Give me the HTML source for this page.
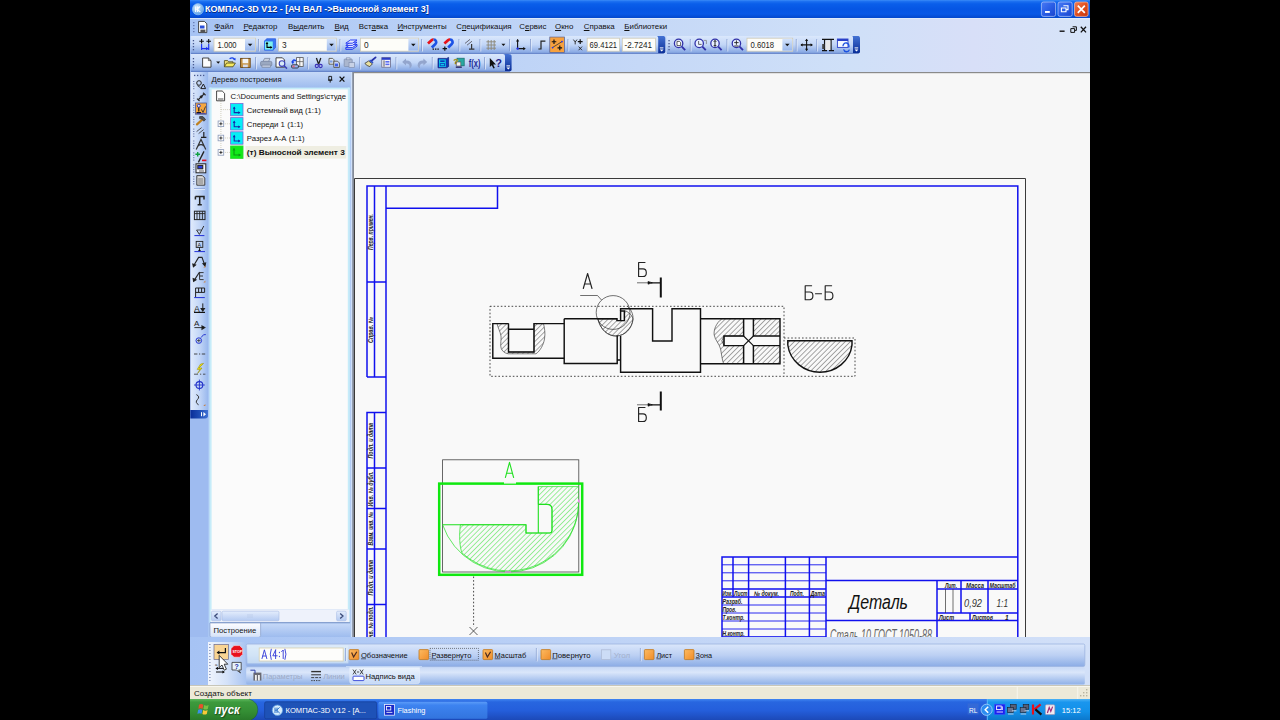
<!DOCTYPE html>
<html><head><meta charset="utf-8">
<style>
*{box-sizing:border-box;margin:0;padding:0}
html,body{width:1280px;height:720px;overflow:hidden;background:#000}
body{font-family:"Liberation Sans",sans-serif;font-size:8px;color:#000;position:relative}
.a{position:absolute}
#app{position:absolute;left:190px;top:0;width:900px;height:720px;background:#9ebbf0;overflow:hidden}
#title{left:0;top:0;width:900px;height:18px;background:linear-gradient(#3a8bf8 0,#1a6ef0 9%,#0a5eea 22%,#0656e4 50%,#0858e6 78%,#0448cc 100%)}
#title .t{left:15px;top:3.5px;font-weight:bold;font-size:9px;color:#fff;white-space:nowrap;text-shadow:0.5px 0.5px 0 #0a2a80}
#menu{left:0;top:18px;width:900px;height:18px;background:linear-gradient(90deg,#a6c3f4 0,#b9d0f6 25%,#c5d8f7 50%,#cfe0f8 73%,#d8dff8 87%,#d6e4f8 100%)}
#menu:before{content:"";position:absolute;left:0;top:0;width:900px;height:1.4px;background:#e4edfb;opacity:.8}
#menu span{position:absolute;top:4px;font-size:7.9px;white-space:nowrap;color:#111}
#tb1{left:0;top:36px;width:900px;height:18px;background:linear-gradient(90deg,#a9c5f4 0,#bdd2f5 40%,#c7d6f3 100%)}
#tb2{left:0;top:54px;width:900px;height:18px;background:linear-gradient(90deg,#a9c5f4 0,#bdd2f5 40%,#c7d6f3 100%)}
.bar{position:absolute;height:17px;border-radius:2px;background:linear-gradient(#dbe8fc 0,#c3d7f7 45%,#8fb0e8 100%)}
.inp{position:absolute;background:#fcfcf8;height:13px;font-size:7.9px;line-height:13px;padding-left:3px;border:1px solid #c8d4e8}

#tree{left:18px;top:72px;width:146px;height:565px;background:#aac6f3}
#treehead{left:0;top:0;width:142px;height:15px;background:linear-gradient(#cfe0fb,#9dbcef);font-size:7.9px;line-height:15px;padding-left:4px}
#treebody{left:2px;top:16px;width:137px;height:520px;background:#fbfbfb}
#treebody span{position:absolute;font-size:7.6px;white-space:nowrap}
#canvas{left:164px;top:72px;width:736px;height:565px;background:#f7f7f7;overflow:hidden}



</style></head><body>
<div id="app">
<div id="title" class="a"><div class="t a">КОМПАС-3D V12 - [АЧ ВАЛ -&gt;Выносной элемент 3]</div>
<svg class="a" style="left:0;top:0" width="900" height="18" viewBox="190 0 900 18">
<defs>
<linearGradient id="wb" x1="0" y1="0" x2="1" y2="1"><stop offset="0" stop-color="#4a7af4"/><stop offset="0.5" stop-color="#2a5ee6"/><stop offset="1" stop-color="#1a44cc"/></linearGradient>
<linearGradient id="wc" x1="0" y1="0" x2="1" y2="1"><stop offset="0" stop-color="#f08058"/><stop offset="0.5" stop-color="#e2501e"/><stop offset="1" stop-color="#c2340e"/></linearGradient>
<radialGradient id="ki" cx="0.4" cy="0.35" r="0.7"><stop offset="0" stop-color="#dff0ff"/><stop offset="1" stop-color="#4d9ae8"/></radialGradient>
</defs>
<circle cx="198" cy="9.2" r="5.6" fill="url(#ki)" stroke="#9cc8f5" stroke-width="0.6"/>
<path d="M195.6 6.5V12M195.6 9.2H197.2L200.2 6.4M197.2 9.2L200.4 12.2M197.6 6.5V12" stroke="#f8fcff" stroke-width="1.1" fill="none"/>
<rect x="1041.4" y="2" width="14.2" height="14.4" rx="2" fill="url(#wb)" stroke="#b8ccfa" stroke-width="0.7"/>
<rect x="1058" y="2" width="14.2" height="14.4" rx="2" fill="url(#wb)" stroke="#b8ccfa" stroke-width="0.7"/>
<rect x="1074.5" y="2" width="13.6" height="14.4" rx="2" fill="url(#wc)" stroke="#f0c0b0" stroke-width="0.7"/>
<rect x="1045" y="11" width="4.8" height="1.9" fill="#fff"/>
<path d="M1063.4 5.8H1068V9.6H1066.6M1061.4 8H1066V11.8H1061.4Z" fill="none" stroke="#fff" stroke-width="1.1"/>
<path d="M1077.8 5.6L1084.8 12.8M1084.8 5.6L1077.8 12.8" stroke="#fff" stroke-width="1.7"/>
</svg>
</div>
<div id="menu" class="a">
<svg class="a" style="left:0;top:0" width="900" height="18" viewBox="190 18 900 18">
<g fill="#5b6ea8"><rect x="193.2" y="22" width="1.2" height="1.2"/><rect x="193.2" y="25" width="1.2" height="1.2"/><rect x="193.2" y="28" width="1.2" height="1.2"/><rect x="193.2" y="31" width="1.2" height="1.2"/></g>
<path d="M198.6 21.4H204.4L206.8 23.8V32.6H198.6Z" fill="#fff" stroke="#333" stroke-width="0.9"/>
<path d="M200 25.5H204.5V28.5H200Z" fill="#2a4fd8"/><rect x="200.4" y="29.6" width="5" height="2.4" fill="#555"/>
<path d="M1059.6 31.2H1064.6" stroke="#111" stroke-width="1.4"/>
<path d="M1072.6 26.8H1076.4V30.4H1075M1070.8 28.6H1074.6V32.4H1070.8Z" fill="none" stroke="#111" stroke-width="1"/>
<path d="M1080.8 26.8L1086 32.4M1086 26.8L1080.8 32.4" stroke="#111" stroke-width="1.3"/>
</svg>
<span style="left:24.3px"><u>Ф</u>айл</span><span style="left:53.4px"><u>Р</u>едактор</span><span style="left:98px">В<u>ы</u>делить</span><span style="left:144.4px"><u>В</u>ид</span><span style="left:168.8px">Вст<u>а</u>вка</span><span style="left:207.4px"><u>И</u>нструменты</span><span style="left:266.2px">С<u>п</u>ецификация</span><span style="left:329.3px">С<u>е</u>рвис</span><span style="left:365px"><u>О</u>кно</span><span style="left:393.8px"><u>С</u>правка</span><span style="left:434.3px"><u>Б</u>иблиотеки</span>
</div>
<svg id="tbs" class="a" style="left:0;top:36px" width="900" height="36" viewBox="190 36 900 36">
<defs>
<linearGradient id="bg" x1="0" y1="0" x2="0" y2="1"><stop offset="0" stop-color="#dbe8fc"/><stop offset="0.5" stop-color="#c2d6f7"/><stop offset="0.92" stop-color="#8aaae4"/><stop offset="1" stop-color="#6f8fd0"/></linearGradient>
<linearGradient id="cap" x1="0" y1="0" x2="0" y2="1"><stop offset="0" stop-color="#4573d4"/><stop offset="1" stop-color="#082c96"/></linearGradient>
<linearGradient id="tbg" x1="0" y1="0" x2="1" y2="0"><stop offset="0" stop-color="#a6c3f4"/><stop offset="0.25" stop-color="#b9d0f6"/><stop offset="0.5" stop-color="#c5d8f7"/><stop offset="0.73" stop-color="#cfe0f8"/><stop offset="0.87" stop-color="#d8dff8"/><stop offset="1" stop-color="#d6e4f8"/></linearGradient>
<linearGradient id="dd" x1="0" y1="0" x2="0" y2="1"><stop offset="0" stop-color="#d4e3fb"/><stop offset="1" stop-color="#9ab8ec"/></linearGradient>
<g id="grip" fill="#48598f"><rect x="0" y="0" width="1.3" height="1.3"/><rect x="0" y="3" width="1.3" height="1.3"/><rect x="0" y="6" width="1.3" height="1.3"/><rect x="0" y="9" width="1.3" height="1.3"/></g>
<g id="capi"><rect x="0" y="11.2" width="3.6" height="1" fill="#fff"/><path d="M0 13.4H3.8L1.9 15.4Z" fill="#fff"/></g>
</defs>
<rect x="190" y="36" width="900" height="36" fill="url(#tbg)"/>
<!-- bars -->
<path d="M191 35.8H662Q665.3 35.8 665.3 38V51.5Q665.3 53.6 662 53.6H191Z" fill="url(#cap)"/>
<rect x="190.6" y="35.8" width="667.6" height="17.8" fill="url(#bg)" transform="scale(1)" style="display:none"/>
<path d="M190.6 35.8H656Q658 35.8 658.2 38V53.6H190.6Z" fill="url(#bg)"/>
<path d="M667 35.8H857Q860 35.8 860 38V51.5Q860 53.6 857 53.6H667Z" fill="url(#cap)"/>
<path d="M667.6 35.8H851.5Q853 35.8 853 38V53.6H667.6Q666.6 53.6 666.6 52V37.5Q666.6 35.8 667.6 35.8Z" fill="url(#bg)"/>
<path d="M191 53.9H508Q511.6 53.9 511.6 56V69.4Q511.6 71.4 508 71.4H191Z" fill="url(#cap)"/>
<path d="M190.6 53.9H503Q505 53.9 505 56V71.4H190.6Z" fill="url(#bg)"/>
<use href="#capi" x="659.8" y="36.2"/><use href="#capi" x="854.6" y="36.2"/><use href="#capi" x="506.4" y="54.2"/>
<use href="#grip" x="192.8" y="40"/><use href="#grip" x="192.8" y="58"/><use href="#grip" x="668.4" y="40"/>
<!-- separators -->
<g stroke="#7f97cc" stroke-width="0.9"><path d="M258.5 39V51M340 39V51M421.7 39V51M459 39V51M480 39V51M509.7 39V51M530.5 39V51M568 39V51M690.3 39V51M727 39V51M796.3 39V51M816.8 39V51"/>
<path d="M255.7 57V69M307.8 57V69M359.8 57V69M396 57V69M432.3 57V69M484.7 57V69"/></g>
<g stroke="#eef4fe" stroke-width="0.7"><path d="M259.3 39.5V51.5M340.8 39.5V51.5M422.5 39.5V51.5M459.8 39.5V51.5M480.8 39.5V51.5M510.5 39.5V51.5M531.3 39.5V51.5M568.8 39.5V51.5M691.1 39.5V51.5M727.8 39.5V51.5M797.1 39.5V51.5M817.6 39.5V51.5"/>
<path d="M256.5 57.5V69.5M308.6 57.5V69.5M360.6 57.5V69.5M396.8 57.5V69.5M433.1 57.5V69.5M485.5 57.5V69.5"/></g>
<!-- inputs -->
<g fill="#fdfdf9" stroke="#cfcab6" stroke-width="0.8">
<rect x="214" y="38.2" width="41.5" height="13"/><rect x="278.6" y="38.2" width="57.7" height="13"/><rect x="360.4" y="38.2" width="58.1" height="13"/>
<rect x="587.2" y="38.2" width="32.3" height="13"/><rect x="622.3" y="38.2" width="33.2" height="13"/><rect x="747" y="38.2" width="45.7" height="13"/>
</g>
<g fill="url(#dd)"><rect x="245" y="38.7" width="10" height="12"/><rect x="326.8" y="38.7" width="9" height="12"/><rect x="408.4" y="38.7" width="9.6" height="12"/><rect x="782.4" y="38.7" width="9.8" height="12"/></g>
<g fill="#111"><path d="M247.8 43.8H252.4L250.1 46.3Z"/><path d="M329.2 43.8H333.8L331.5 46.3Z"/><path d="M411 43.8H415.6L413.3 46.3Z"/><path d="M785 43.8H789.6L787.3 46.3Z"/><path d="M501.4 43.8H505.4L503.4 46Z"/><path d="M216.2 61.6H220.2L218.2 63.8Z"/></g>
<g font-family="Liberation Sans, sans-serif" font-size="8.3" fill="#222">
<text x="217.6" y="47.8" textLength="19" lengthAdjust="spacingAndGlyphs">1.000</text><text x="282" y="47.8">3</text><text x="364" y="47.8">0</text><text x="589.6" y="47.8" textLength="27.5" lengthAdjust="spacingAndGlyphs">69.4121</text><text x="624.6" y="47.8" textLength="27.5" lengthAdjust="spacingAndGlyphs">-2.7241</text><text x="750.6" y="47.8" textLength="23.5" lengthAdjust="spacingAndGlyphs">0.6018</text>
</g>
<!--ICONS-->
<!-- row1 icons -->
<g fill="none">
<!-- scale icon -->
<path d="M201.6 39V43.6M199.3 41.3H203.9M208.7 39V43.6M206.4 41.3H211" stroke="#111" stroke-width="1.1"/>
<path d="M201.6 44V50M208.7 44V50M201.6 48.6H208.7" stroke="#1a2ef0" stroke-width="1.1"/>
<path d="M206 47L208.6 48.6L206 50.2Z" fill="#1a2ef0"/>
<!-- layer state -->
<path d="M266.6 38.8H275.6V47.4L273.2 50H264.6V41.2Z" fill="#3d78f0" stroke="#2a5ae0" stroke-width="0.8"/>
<rect x="264.6" y="41" width="8.6" height="9" fill="#7cf0ee" stroke="#2a6af0" stroke-width="0.8"/>
<path d="M267 42.4V47.4H271.6" stroke="#000" stroke-width="1.1"/>
<path d="M265.6 44L267 42L268.4 44ZM270.4 46L272.4 47.4L270.4 48.8Z" fill="#000"/>
<!-- layers -->
<g stroke="#1a2ef0" stroke-width="0.9" fill="#e8ecff">
<path d="M345.8 47.6L350.4 44.4H357L352.4 47.6Z"/><path d="M345.8 45.4L350.4 42.2H357L352.4 45.4Z"/><path d="M345.8 43.2L350.4 40H357L352.4 43.2Z"/></g>
<path d="M345.8 47.6V49.4H352.4L357 46.2V44.4" stroke="#1a2ef0" stroke-width="0.9"/>
<!-- magnets -->
<g stroke-width="2.7" stroke-linecap="butt">
<g id="mag"><path d="M428 43.6L431.6 40.2A2.6 2.6 0 0 1 433.6 39.5" stroke="#e6121a"/><path d="M433.6 39.5A2.6 2.6 0 0 1 435.4 44L431.8 47.4" stroke="#1c52e6"/></g>
<use href="#mag" x="16.4"/>
</g>
<path d="M432.6 49.2H434M435 49.2H436.4M437.4 49.2H438.8" stroke="#111" stroke-width="1.2"/>
<path d="M442.6 48.6H447M444.8 46.6V50.8" stroke="#111" stroke-width="1.2"/>
<!-- ortho-ish -->
<path d="M465 43.4L470 39.4M467 45.2L472 41.2" stroke="#5a5a66" stroke-width="0.9"/>
<path d="M471.6 44V48.8M469 49.2H474.4" stroke="#333" stroke-width="1.2"/>
<!-- grid -->
<g stroke="#8c8878" stroke-width="0.9"><path d="M488.2 40V50M491.2 40V50M494.2 40V50M486.4 41.8H496M486.4 45H496M486.4 48.2H496"/></g>
<!-- LCS -->
<path d="M517.6 39.4V48.6H525" stroke="#111" stroke-width="1.1"/>
<path d="M516 41.6L517.6 39L519.2 41.6ZM523.2 47L525.8 48.6L523.2 50.2Z" fill="#111"/>
<circle cx="517.6" cy="48.6" r="1.2" fill="#2030f0"/>
<!-- step -->
<path d="M538.4 49H541V41.2H545.4" stroke="#222" stroke-width="1.2"/>
<!-- active orange -->
<rect x="549.8" y="37" width="14.6" height="15.4" fill="#f7a13e" stroke="#4a5c9a" stroke-width="0.7"/>
<path d="M552.4 47.6L562 41.6" stroke="#333" stroke-width="0.8"/>
<path d="M554 39.4V44M551.7 41.7H556.3M559.8 45.6V50.2M557.5 47.9H562.1" stroke="#111" stroke-width="1.15"/>
<circle cx="552.6" cy="47.6" r="0.9" fill="#2838f0"/><circle cx="562" cy="41.6" r="0.9" fill="#2838f0"/>
<!-- Y+x -->
<path d="M573.4 39.6L575.2 42L577 39.6M575.2 42V44.4" stroke="#222" stroke-width="0.9"/>
<path d="M580.2 39.2V44M577.8 41.6H582.6" stroke="#111" stroke-width="1.2"/>
<path d="M578.6 46.6L582 50.2M582 46.6L578.6 50.2" stroke="#222" stroke-width="0.9"/>
<!-- zoom icons -->
<g stroke="#3030a8" stroke-width="1.3">
<circle cx="678.6" cy="43.4" r="4.2" fill="#e8f0ff"/><path d="M681.8 46.6L685.2 50.2" stroke-width="1.8"/>
<circle cx="699.2" cy="43.4" r="4.2" fill="#e8f0ff"/><path d="M702.4 46.6L705.8 50.2" stroke-width="1.8"/>
<circle cx="715" cy="43.4" r="4.2" fill="#e8f0ff"/><path d="M718.2 46.6L721.6 50.2" stroke-width="1.8"/>
<circle cx="736.4" cy="43.4" r="4.2" fill="#e8f0ff"/><path d="M739.6 46.6L743 50.2" stroke-width="1.8"/>
</g>
<path d="M677 41.4H679.4L680.6 42.6V45.6H677Z" fill="#fff" stroke="#222" stroke-width="0.7"/>
<path d="M698.6 41V44.4H701.6" stroke="#444" stroke-width="0.8"/><path d="M703.6 40.4H706.4V44" stroke="#777" stroke-width="0.7"/>
<path d="M715 40.6V46.2M713.8 41.8L715 40.4L716.2 41.8M713.8 45L715 46.4L716.2 45" stroke="#111" stroke-width="0.9"/>
<path d="M734.2 42.6H738.6M736.4 40.4V44.8M734.2 46H738.6" stroke="#222" stroke-width="0.9"/>
<!-- pan -->
<path d="M806.6 39.4V50.4M801 44.9H812.2" stroke="#111" stroke-width="1.1"/>
<path d="M805 41L806.6 38.8L808.2 41ZM805 48.8L806.6 51L808.2 48.8ZM802.6 43.3L800.4 44.9L802.6 46.5ZM810.6 43.3L812.8 44.9L810.6 46.5Z" fill="#111"/>
<!-- refresh-ish -->
<path d="M822 39.4H834M824.6 39.4V50.6M831 39.4V50.6M822 50.6H827M829 50.6H834" stroke="#111" stroke-width="1.3"/>
<rect x="822.2" y="44" width="2.4" height="5" fill="#444"/><rect x="825.4" y="40.4" width="5" height="9.6" fill="#e8e8e8"/>
<rect x="837.4" y="39" width="10.6" height="8.4" fill="#f4f8ff" stroke="#2a40c8" stroke-width="0.9"/><rect x="837.4" y="39" width="10.6" height="2" fill="#2a40c8"/>
<path d="M843 46.2A3 3 0 1 1 848.6 47.4M849.4 49.6A3 3 0 0 1 843.6 49.4" stroke="#1a50e0" stroke-width="1.3"/>
</g>
<!-- row2 icons -->
<g fill="none">
<path d="M202.6 58H208.4L211 60.6V67.2H202.6Z" fill="#fdfdfd" stroke="#333" stroke-width="0.9"/><path d="M208.4 58V60.6H211" stroke="#333" stroke-width="0.7"/>
<!-- open -->
<path d="M224.4 66.8V60.6H227.6L228.6 61.8H233V63" fill="#f2e27a" stroke="#4a4418" stroke-width="0.8"/>
<path d="M224.4 66.8L226.6 63H235.4L233 66.8Z" fill="#f6ea60" stroke="#4a4418" stroke-width="0.8"/>
<path d="M229.6 58.8Q232.6 56.6 234.6 59.4" stroke="#1a44e8" stroke-width="1.3"/><path d="M233.2 59.8L235.6 60.4L235.4 57.8Z" fill="#1a44e8"/>
<!-- save -->
<rect x="240.6" y="58.4" width="9.6" height="9" fill="#c7964a" stroke="#6a4410" stroke-width="0.9"/>
<rect x="242.6" y="58.8" width="5.6" height="4.4" fill="#f4f4f4"/><rect x="243" y="64.6" width="4.8" height="2.6" fill="#d8dce8"/>
<!-- print -->
<path d="M263 61.4L264.6 58.4H270L268.6 61.4" fill="#c8d0de" stroke="#7a86a0" stroke-width="0.8"/>
<rect x="260.6" y="61.4" width="11.2" height="4.6" rx="1.2" fill="#9aa8c0" stroke="#7684a0" stroke-width="0.8"/><rect x="262" y="65" width="8.4" height="2.4" fill="#b8c2d6" stroke="#7a86a0" stroke-width="0.6"/>
<!-- preview -->
<path d="M276 57.8H282.4L284.6 60V67.2H276Z" fill="#fdfdfd" stroke="#333" stroke-width="0.9"/>
<circle cx="282" cy="63.6" r="2.8" fill="#d8ecf8" stroke="#3a40b8" stroke-width="1.1"/><path d="M284 65.8L287 68.6" stroke="#3a40b8" stroke-width="1.5"/>
<!-- spec -->
<rect x="296.6" y="57.6" width="6.6" height="8.8" fill="#f8f8f8" stroke="#555" stroke-width="0.8"/><path d="M299.8 57.6V66.4M296.6 61.6H303.2" stroke="#555" stroke-width="0.7"/>
<path d="M296 60.8Q292.6 58.6 292.6 62.4" stroke="#1a44e8" stroke-width="1.5"/><path d="M291 61.6L292.8 64.2L294.4 61.6Z" fill="#1a44e8"/>
<rect x="291.6" y="64.8" width="6.8" height="3.2" rx="1" fill="#9ab4f0" stroke="#222" stroke-width="0.8"/><rect x="292.6" y="65.6" width="2" height="1.6" fill="#f06070"/>
<!-- cut -->
<path d="M316.4 58L318.6 64.2M320.8 58L318.6 64.2" stroke="#222" stroke-width="1.3"/>
<circle cx="316.8" cy="66" r="1.6" stroke="#3a30b8" stroke-width="1.1"/><circle cx="320.6" cy="66" r="1.6" stroke="#3a30b8" stroke-width="1.1"/>
<!-- copy -->
<path d="M329 58.4H332.6L334 59.8V64.2H329Z" fill="#e8eef8" stroke="#4a4636" stroke-width="0.8"/><path d="M333.8 61.2H337.6L339.4 63V67.4H333.8Z" fill="#c8d4f8" stroke="#4a4636" stroke-width="0.8"/>
<rect x="335" y="63.6" width="3" height="2.8" fill="#4060e8"/><rect x="330" y="60.4" width="2.6" height="2.2" fill="#80a0e0"/>
<!-- paste (disabled) -->
<rect x="344.2" y="59" width="8" height="7.6" rx="0.8" fill="#aab6ce" stroke="#8290b0" stroke-width="0.8"/><rect x="346.4" y="57.8" width="3.6" height="2" fill="#c8d0e0" stroke="#8290b0" stroke-width="0.6"/>
<rect x="349" y="62.6" width="5.6" height="4.8" fill="#c8d2e6" stroke="#8290b0" stroke-width="0.7"/>
<!-- brush -->
<path d="M371.6 60.8L375.6 57.4" stroke="#2830a8" stroke-width="1.8" stroke-linecap="round"/>
<path d="M368.6 61L372.4 63.8L369.8 66.6Q367 66 364.8 63.4Z" fill="#e8e0a0" stroke="#333" stroke-width="0.8"/><path d="M369.6 60.2L373 62.8" stroke="#3050c8" stroke-width="1.6"/>
<!-- props -->
<rect x="381.8" y="57.6" width="8.6" height="9.6" fill="#f4f4fc" stroke="#6a6a8a" stroke-width="0.8"/><rect x="381.8" y="57.6" width="8.6" height="2.2" fill="#2a3cc8"/>
<path d="M384 60.4V66.6" stroke="#333" stroke-width="0.8"/><rect x="385.4" y="61" width="4" height="1.6" fill="#5a6cf0"/><rect x="385.4" y="63.6" width="4" height="1.6" fill="#5a6cf0"/>
<!-- undo/redo disabled -->
<path d="M402.2 62L406 58.4V60.6Q411.6 60.4 411.8 65.4Q411.6 67.4 409.4 68.4Q410.6 63.6 406 63.6V65.6Z" fill="#93a5cd"/>
<path d="M427.2 62L423.4 58.4V60.6Q417.8 60.4 417.6 65.4Q417.8 67.4 420 68.4Q418.8 63.6 423.4 63.6V65.6Z" fill="#93a5cd"/>
<!-- calc -->
<path d="M438 58.4H446.6L448.6 57.4V66.6L446.6 67.8H438Z" fill="#1038b8" stroke="#0a2078" stroke-width="0.7"/>
<rect x="439" y="59.4" width="6.8" height="7.6" fill="#10c8e8"/><rect x="440.2" y="60.4" width="4.4" height="1.6" fill="#1038b8"/><rect x="440.2" y="63.6" width="4.4" height="2.2" fill="none" stroke="#1038b8" stroke-width="0.8"/>
<!-- lib help -->
<rect x="457" y="58.2" width="7.2" height="7.6" fill="#28a8a0" stroke="#186868" stroke-width="0.7"/><rect x="456.2" y="62" width="4.6" height="4" fill="#f4f0f4" stroke="#555" stroke-width="0.6"/><rect x="455.8" y="66.4" width="6" height="1.6" fill="#3a3a78"/>
<text x="453.4" y="63.8" font-family="Liberation Sans, sans-serif" font-weight="bold" font-size="8" fill="#d8c410" stroke="#6a5c08" stroke-width="0.3">?</text>
<!-- f(x) -->
<text x="468.8" y="66.6" font-family="Liberation Sans, sans-serif" font-weight="bold" font-size="10.5" fill="#1c2a98" textLength="11.6" lengthAdjust="spacingAndGlyphs">f(x)</text>
<!-- help pointer -->
<path d="M489.8 58V67L491.8 65.2L493.4 68.6L494.8 68L493.2 64.6H496Z" fill="#111"/>
<text x="495.2" y="66.6" font-family="Liberation Sans, sans-serif" font-weight="bold" font-size="11" fill="#1c2088">?</text>
</g>
<!--/ICONS-->
</svg>
<svg id="ltools" class="a" style="left:0;top:72px;background:none" width="19" height="348" viewBox="190 72 19 348">
<defs><linearGradient id="lg" x1="0" y1="0" x2="1" y2="0"><stop offset="0" stop-color="#e2ecfc"/><stop offset="0.5" stop-color="#c4d7f7"/><stop offset="1" stop-color="#98b7ed"/></linearGradient>
<linearGradient id="lcap" x1="0" y1="0" x2="1" y2="0"><stop offset="0" stop-color="#0a2e98"/><stop offset="0.5" stop-color="#1e4cb4"/><stop offset="1" stop-color="#4273d6"/></linearGradient></defs>
<path d="M190.3 72H208.3V415Q208.3 418.4 205 418.4H190.3Z" fill="url(#lcap)"/>
<rect x="190.3" y="72" width="18" height="338" fill="url(#lg)"/>
<path d="M203.4 412L206 414.2L203.4 416.4Z" fill="#fff"/><rect x="201" y="412.2" width="1" height="4" fill="#fff"/>
<g fill="#4a5a90"><rect x="194" y="74.8" width="1.3" height="1.3"/><rect x="197" y="74.8" width="1.3" height="1.3"/><rect x="200" y="74.8" width="1.3" height="1.3"/><rect x="203" y="74.8" width="1.3" height="1.3"/>
<g id="sg"><rect x="193.3" y="81" width="1" height="1"/><rect x="193.3" y="83.4" width="1" height="1"/><rect x="193.3" y="85.8" width="1" height="1"/><rect x="193.3" y="88.2" width="1" height="1"/></g>
<use href="#sg" y="11.9"/><use href="#sg" y="23.8"/><use href="#sg" y="35.7"/><use href="#sg" y="47.6"/><use href="#sg" y="59.5"/><use href="#sg" y="71.4"/><use href="#sg" y="83.3"/><use href="#sg" y="95.2"/></g>
<g fill="none" stroke="#222" stroke-width="1">
<!-- shapes 85 -->
<circle cx="199" cy="83" r="2.3"/><path d="M200.8 88.6L203.4 84L205.6 88.6Z"/><path d="M197.4 85.6L200.4 87.6" stroke-width="0.8"/>
<!-- dim 96.7 -->
<path d="M198 100L204.4 93.6" stroke-width="1.1"/><path d="M197 98.6L199.6 101M203 92.8L205.6 95.2" stroke="#333" stroke-width="1.2"/><circle cx="201.2" cy="96.8" r="1" fill="#222"/>
<!-- active 108.7 -->
<rect x="195.6" y="103" width="10.8" height="11.2" fill="#f5a640" stroke="#3a4a8a" stroke-width="0.7"/>
<circle cx="198.8" cy="105.8" r="1.5" stroke="#2030c0" stroke-width="0.9" fill="#e8e8ff"/><path d="M198.8 107.4V111.4M196.6 112.6H201" stroke="#111" stroke-width="1.1"/><path d="M201.4 109.4L203 112.4L205.6 106.4" stroke="#333" stroke-width="0.9"/><path d="M196.4 113.4H205.8" stroke="#2030c0" stroke-width="0.8"/>
<!-- hammer 120 -->
<path d="M197 124.4L202.6 119.2" stroke="#c08020" stroke-width="2.2" stroke-linecap="round"/><path d="M199.6 116.6Q203.4 115.2 205.6 119.6L203.8 121.2Q202.6 118.4 199.6 118.6Z" fill="#555" stroke="#333" stroke-width="0.7"/>
<!-- hatch 132.5 -->
<path d="M196.6 131.6L201.6 127.6M198.6 133.6L203.6 129.6" stroke="#444" stroke-width="0.9"/><path d="M203.8 132V137M201 137.4H206.4" stroke="#222" stroke-width="1.2"/>
<!-- compass 144 -->
<path d="M196.2 149.6L201 139.4L205.8 149.6M198 146Q201 143.4 204 146" stroke="#333" stroke-width="1.2"/>
<!-- plus/minus 156.7 -->
<path d="M198.4 162.4L204 151.4" stroke="#222" stroke-width="1.3"/><path d="M195.4 154.2H200M197.7 152V156.4" stroke="#10a040" stroke-width="1.4"/><path d="M202 160.4H206.4" stroke="#e01020" stroke-width="1.6"/>
<!-- window 168.3 -->
<rect x="196" y="163.8" width="9.8" height="9" fill="#f4f4f8" stroke="#222" stroke-width="1"/><rect x="197.8" y="165.4" width="5" height="3.4" fill="#2a3ce0"/><path d="M199 171H204" stroke="#444" stroke-width="0.8"/>
<!-- doc 180 -->
<path d="M196.8 175.6H202.4L204.8 178V185.2H196.8Z" fill="#d8d8d8" stroke="#333" stroke-width="0.9"/><path d="M198.2 179H203.2M198.2 181H203.2M198.2 183H203.2" stroke="#555" stroke-width="0.7"/>
</g>
<path d="M194 188.6H205" stroke="#7f98d0" stroke-width="0.8"/><path d="M194 189.4H205" stroke="#f0f5fe" stroke-width="0.8"/>
<g fill="none" stroke="#222" stroke-width="1.1">
<!-- T -->
<path d="M195.4 196.6H204V199.4M195.4 196.6V199.4M199.7 196.6V204.6M197.6 204.8H201.8" stroke-width="1.5"/>
<!-- table -->
<rect x="194.4" y="211.2" width="10.6" height="8.4" stroke-width="1"/><path d="M194.4 213.6H205M197 211.2V219.6M199.7 211.2V219.6M202.4 211.2V219.6" stroke-width="0.9"/>
<!-- roughness -->
<path d="M196.6 230L199.4 234.4L203.8 226" stroke="#333" stroke-width="1"/><path d="M196.6 230H201.6" stroke="#333" stroke-width="0.8"/><path d="M194.4 235.6H204.4" stroke="#2030d8" stroke-width="1"/>
<!-- base -->
<rect x="196.2" y="241.4" width="6.6" height="6" stroke-width="0.9"/><text x="197.6" y="246.6" font-family="Liberation Sans, sans-serif" font-size="5.4" fill="#222" stroke="none">A</text><path d="M199.5 247.4V250.4" stroke-width="0.9"/><path d="M197.8 251.2L199.5 249L201.2 251.2Z" fill="#111" stroke="none"/><path d="M194.4 251.6H205" stroke="#2030d8" stroke-width="1"/>
<!-- leader -->
<path d="M193.6 265.8L198.6 257.4H202L204.6 264.6" stroke-width="1.1"/><path d="M192.8 264L193.4 266.8L195.6 265Z" fill="#111"/><path d="M203 263.6L205 266L205.6 263Z" fill="#111"/><path d="M203.4 267.4L205.4 265.4V267.4Z" fill="#c88040" stroke="none"/>
<!-- /E -->
<path d="M194 280.6L199.6 272" stroke-width="1.1"/><path d="M193.2 278.6L193.6 281.4L196 279.8Z" fill="#111"/><path d="M203.6 272.6H199.6V279.6H203.6M199.6 276H203" stroke-width="0.9"/><path d="M203.4 282.6L205.4 280.6V282.6Z" fill="#c88040" stroke="none"/>
<!-- table2 -->
<path d="M195.6 297V288H204.6V292.4H195.6M198.6 288V292.4M201.6 288V292.4" stroke-width="1"/><path d="M194.2 297.6H204.8" stroke="#2030d8" stroke-width="1"/>
<!-- A down -->
<text x="194" y="311.6" font-family="Liberation Sans, sans-serif" font-size="8.6" fill="#222" stroke="none">A</text><path d="M202.8 303.4V310" stroke-width="1"/><path d="M201.2 308.6L202.8 311L204.4 308.6Z" fill="#111"/><path d="M194 312.4H205" stroke="#111" stroke-width="1.2"/>
<!-- A right -->
<text x="194" y="326" font-family="Liberation Sans, sans-serif" font-size="8" fill="#222" stroke="none">A</text><path d="M194.4 327.6H203" stroke-width="0.9"/><path d="M202 326L204.8 327.6L202 329.2Z" fill="#111"/>
<!-- circle -->
<circle cx="198.8" cy="340.6" r="2.8" stroke="#2838d0" stroke-width="1"/><path d="M201 337.6Q203.6 333.4 205.8 334.6" stroke="#2838d0" stroke-width="1"/><path d="M197 340.6H200.6M198.8 338.8V342.4" stroke="#222" stroke-width="0.7"/>
<!-- dashes -->
<path d="M194 354H197.4M199 354H200.2M201.8 354H205.2" stroke="#333" stroke-width="0.9"/>
<!-- lightning -->
<path d="M203.6 363.4L199 368H202L197.6 373.4L200 369.4H197.2L200.6 364Z" fill="#f4e410" stroke="#8a8000" stroke-width="0.5"/><path d="M194 374.2H198M200 374.2H201.2M203 374.2H205.4" stroke="#333" stroke-width="0.8"/>
<!-- target -->
<circle cx="199.4" cy="385" r="3.4" stroke="#2030c8" stroke-width="1.1"/><path d="M199.4 379.6V390.4M194 385H204.8" stroke="#2030c8" stroke-width="0.9"/>
<!-- wave -->
<path d="M196.4 394.6Q200.4 396.6 197.4 399.6Q194.6 402.4 198.6 404.8" stroke="#333" stroke-width="1"/><path d="M203.4 406L205.4 404V406Z" fill="#c88040" stroke="none"/>
</g>
</svg>
<div id="tree" class="a">
<svg class="a" style="left:0;top:0" width="146" height="565" viewBox="208 72 146 565">
<defs><linearGradient id="th" x1="0" y1="0" x2="0" y2="1"><stop offset="0" stop-color="#c6d9f8"/><stop offset="1" stop-color="#9dbbee"/></linearGradient>
<linearGradient id="sb" x1="0" y1="0" x2="0" y2="1"><stop offset="0" stop-color="#e4edfc"/><stop offset="1" stop-color="#b4caf2"/></linearGradient>
<linearGradient id="tab" x1="0" y1="0" x2="0" y2="1"><stop offset="0" stop-color="#fdfdff"/><stop offset="1" stop-color="#d5e2f8"/></linearGradient>
<g id="ti"><rect x="0" y="0" width="12.4" height="12.4" fill="#06eef6" stroke="#8068d8" stroke-width="0.8"/><path d="M3.6 4V9.2H9" fill="none" stroke="#1428a8" stroke-width="1.1"/><path d="M2.2 5.4L3.6 3L5 5.4ZM7.6 7.8L10 9.2L7.6 10.6Z" fill="#1428a8"/></g>
<g id="pl"><rect x="0" y="0" width="5.6" height="5.6" fill="#fff" stroke="#8a9ab8" stroke-width="0.8"/><path d="M1.2 2.8H4.4M2.8 1.2V4.4" stroke="#111" stroke-width="0.8"/></g>
</defs>
<rect x="208" y="72" width="146" height="565" fill="#a9c6f3"/>
<rect x="208.3" y="72" width="142.6" height="16.4" fill="url(#th)"/>
<rect x="350.8" y="72" width="1.6" height="565" fill="#cfe0fa"/><rect x="352.4" y="72" width="1.4" height="565" fill="#7d7d80"/>
<rect x="210.8" y="88.6" width="138.4" height="521" fill="#fbfbfb"/>
<rect x="209.4" y="87.6" width="2.2" height="535" fill="#c6ecf9"/><rect x="209.4" y="87.6" width="140.4" height="1.8" fill="#c6ecf9"/><rect x="347.8" y="87.6" width="2" height="535" fill="#c6ecf9"/>
<!-- pin & close -->
<path d="M328.8 76.4H331.6V80H328.8ZM328 80.2H332.4M330.2 80.2V82.6" fill="none" stroke="#111" stroke-width="0.9"/>
<path d="M339.6 76.6L344.4 81.6M344.4 76.6L339.6 81.6" stroke="#111" stroke-width="1.3"/>
<!-- tree lines -->
<path d="M220.9 101V152.4M220.9 109.6H230M220.9 123.8H230M220.9 138H230M220.9 152.4H230" fill="none" stroke="#c8c4b0" stroke-width="0.8" stroke-dasharray="1 1"/>
<!-- doc icon -->
<path d="M216.6 91H222.2L224.6 93.4V100.8H216.6Z" fill="#fff" stroke="#333" stroke-width="0.9"/><path d="M218 99H223.4" stroke="#555" stroke-width="1"/>
<use href="#ti" x="230.6" y="103.4"/><use href="#ti" x="230.6" y="117.6"/><use href="#ti" x="230.6" y="131.8"/>
<g transform="translate(230.6 146)"><rect x="0" y="0" width="12.4" height="12.4" fill="#10ea18" stroke="#30d830" stroke-width="0.9"/><path d="M3.4 2.6V9H9.6" fill="none" stroke="#0a9a10" stroke-width="1.1"/><path d="M2 4.4L3.4 2L4.8 4.4ZM8 7.6L10.4 9L8 10.4Z" fill="#0a9a10"/></g>
<use href="#pl" x="218.1" y="121"/><use href="#pl" x="218.1" y="135.2"/><use href="#pl" x="218.1" y="149.6"/>
<rect x="245.6" y="146" width="100.6" height="12.6" fill="#efeee2"/>
<g font-family="Liberation Sans, sans-serif" font-size="7.7" fill="#111">
<text x="230.6" y="98.8" textLength="115.5" lengthAdjust="spacingAndGlyphs">C:\Documents and Settings\студе</text>
<text x="246.8" y="113" textLength="74" lengthAdjust="spacingAndGlyphs">Системный вид (1:1)</text>
<text x="246.8" y="127.2" textLength="56.4" lengthAdjust="spacingAndGlyphs">Спереди 1 (1:1)</text>
<text x="246.8" y="141.4" textLength="57.8" lengthAdjust="spacingAndGlyphs">Разрез А-А (1:1)</text>
<text x="246.8" y="155.4" font-weight="bold" textLength="98" lengthAdjust="spacingAndGlyphs">(т) Выносной элемент 3</text>
<text x="211.6" y="82.4" font-size="7.9" textLength="70" lengthAdjust="spacingAndGlyphs">Дерево построения</text>
</g>
<!-- scrollbar -->
<rect x="210.8" y="609.6" width="138.4" height="12.4" fill="#eef2fb"/>
<rect x="211.4" y="611.2" width="9.6" height="9.6" rx="1.2" fill="url(#sb)" stroke="#a8bce4" stroke-width="0.6"/>
<rect x="336.6" y="611.2" width="9.6" height="9.6" rx="1.2" fill="url(#sb)" stroke="#a8bce4" stroke-width="0.6"/>
<rect x="222" y="611.2" width="57" height="9.6" rx="1.2" fill="url(#sb)" stroke="#a8bce4" stroke-width="0.6"/>
<path d="M217.6 613.4L214.8 616L217.6 618.6M340.2 613.4L343 616L340.2 618.6" fill="none" stroke="#3a4a78" stroke-width="1.3"/>
<path d="M248 614V618M250 614V618M252 614V618" stroke="#b8c8e8" stroke-width="0.7"/>
<!-- tab -->
<rect x="260.6" y="623.4" width="90" height="14" fill="url(#th)"/>
<rect x="210" y="622.2" width="140" height="1" fill="#7f98c8"/>
<path d="M210 623V635.6Q210 637.4 212 637.4H258.6Q260.6 637.4 260.6 635.6V623Z" fill="url(#tab)" stroke="#8aa0cc" stroke-width="0.7"/>
<text x="213.6" y="633.2" font-family="Liberation Sans, sans-serif" font-size="7.8" fill="#111" textLength="42.6" lengthAdjust="spacingAndGlyphs">Построение</text>
</svg>
</div>
<div id="canvas" class="a">
<svg class="a" style="left:0;top:0" width="736" height="565" viewBox="354 72 736 565">
<defs>
<pattern id="h" width="3.6" height="3.6" patternUnits="userSpaceOnUse" patternTransform="rotate(-45)"><line x1="0" y1="0" x2="3.6" y2="0" stroke="#222" stroke-width="0.78"/></pattern>
<pattern id="hg" width="3.6" height="3.6" patternUnits="userSpaceOnUse" patternTransform="rotate(-45)"><line x1="0" y1="0" x2="3.6" y2="0" stroke="#18dc18" stroke-width="0.85"/></pattern>
<clipPath id="cA"><rect x="442.6" y="484" width="136.2" height="88"/></clipPath>
</defs>
<rect x="354" y="72" width="736" height="1.2" fill="#8a8a8a"/>
<!-- sheet -->
<path d="M354.5 637V178.5H1025.5V637" fill="#f9f9f9" stroke="#3a3a3a" stroke-width="1"/>
<!-- blue frame -->
<g fill="none" stroke="#1010ee" stroke-width="1.5">
<path d="M367 377V186H1017.8V637"/>
<path d="M386 186V637"/>
<path d="M374.5 186V377M367 282H386M367 377H386"/>
<path d="M386 208.3H497.5V186"/>
<path d="M367 637V412.5H386M374.5 412.5V637M367 468H386M367 508.5H386M367 549H386M367 604.5H386"/>
</g>
<!-- title block -->
<g fill="none" stroke="#1010ee" stroke-width="1.5">
<path d="M722 637V557H1017.8"/>
<path d="M733 557V597M748.6 557V637M785.4 557V637M809.4 557V637M826 557V637"/>
<path d="M722 589H826M722 597H826" />
<path d="M826 580.6H1017.8M826 620.6H1017.8M937 580.6V637"/>
<path d="M937 589H1017.8M937 613H1017.8M961 580.6V613M988 580.6V613M970 613V620.6"/>
</g>
<g fill="none" stroke="#1010ee" stroke-width="0.9">
<path d="M722 564.8H826M722 572.8H826M722 580.8H826M722 605H826M722 613H826M722 621H826M722 629H826M722 636.6H826"/>
</g>
<g font-family="Liberation Sans, sans-serif" font-style="italic" fill="#111">
<text x="849" y="609" font-size="19.5" textLength="59" lengthAdjust="spacingAndGlyphs">Деталь</text>
<text x="830" y="641" font-size="16.5" textLength="102" lengthAdjust="spacingAndGlyphs" fill="#666">Сталь 10  ГОСТ 1050-88</text>
<g font-size="6.6" font-weight="bold" fill="#222">
<text x="945" y="587.6" textLength="12" lengthAdjust="spacingAndGlyphs">Лит.</text>
<text x="966" y="587.6" textLength="18" lengthAdjust="spacingAndGlyphs">Масса</text>
<text x="989.5" y="587.6" textLength="26" lengthAdjust="spacingAndGlyphs">Масштаб</text>
<text x="939" y="619.6" textLength="15" lengthAdjust="spacingAndGlyphs">Лист</text>
<text x="972" y="619.6" textLength="21" lengthAdjust="spacingAndGlyphs">Листов</text>
<text x="1005" y="619.6">1</text>
<text x="722.5" y="596.2" textLength="10" lengthAdjust="spacingAndGlyphs">Изм.</text>
<text x="734" y="596.2" textLength="13.5" lengthAdjust="spacingAndGlyphs">Лист</text>
<text x="754" y="596.2" textLength="25" lengthAdjust="spacingAndGlyphs">№ докум.</text>
<text x="790" y="596.2" textLength="14" lengthAdjust="spacingAndGlyphs">Подп.</text>
<text x="810.5" y="596.2" textLength="14.5" lengthAdjust="spacingAndGlyphs">Дата</text>
<text x="722.5" y="604.4" textLength="20" lengthAdjust="spacingAndGlyphs">Разраб.</text>
<text x="722.5" y="612.4" textLength="14" lengthAdjust="spacingAndGlyphs">Пров.</text>
<text x="722.5" y="620.2" textLength="22" lengthAdjust="spacingAndGlyphs">Т.контр.</text>
<text x="722.5" y="636" textLength="22" lengthAdjust="spacingAndGlyphs">Н.контр.</text>
</g>
<g font-size="11.5" fill="#333">
<text x="964" y="606.6" textLength="18" lengthAdjust="spacingAndGlyphs">0,92</text>
<text x="996.5" y="606.6" textLength="11.5" lengthAdjust="spacingAndGlyphs">1:1</text>
</g>
<g font-size="6.4" font-weight="bold" fill="#222">
<text transform="translate(373 250) rotate(-90)" textLength="36" lengthAdjust="spacingAndGlyphs">Перв. примен.</text>
<text transform="translate(373 343) rotate(-90)" textLength="26" lengthAdjust="spacingAndGlyphs">Справ. №</text>
<text transform="translate(373 458.5) rotate(-90)" textLength="35.5" lengthAdjust="spacingAndGlyphs">Подп. и дата</text>
<text transform="translate(373 506.5) rotate(-90)" textLength="35" lengthAdjust="spacingAndGlyphs">Инв. № дубл.</text>
<text transform="translate(373 545.5) rotate(-90)" textLength="33.5" lengthAdjust="spacingAndGlyphs">Взам. инв. №</text>
<text transform="translate(373 595.5) rotate(-90)" textLength="35.5" lengthAdjust="spacingAndGlyphs">Подп. и дата</text>
<text transform="translate(373 641.5) rotate(-90)" textLength="35" lengthAdjust="spacingAndGlyphs">Инв. № подл.</text>
</g>
</g>
<!-- dotted view frames -->
<g fill="none" stroke="#333" stroke-width="0.9" stroke-dasharray="1.6 2">
<rect x="490" y="306.3" width="294" height="70"/>
<path d="M784 338H855V376.3H784"/>
<path d="M473.6 576.5V627"/>
</g>
<path d="M469.5 627l8 8m0-8l-8 8" stroke="#333" stroke-width="0.8" fill="none"/>
<!-- hatch fills (main view) -->
<g stroke="#3a3a3a" stroke-width="0.65">
<path fill="url(#h)" d="M497 323.6C498 328 500 331 501 336C501.5 341 499.5 346 502 350C504 353 507 353.6 508.5 353.8L536 353.8C540 351 543.5 345 544.5 339C545.5 333 544.5 328 543.5 323.6L534 323.6V352H508.5V323.6Z"/>
<path fill="url(#h)" d="M722 318.7C716 323 713.5 330 714.2 335C715 340 719.5 344 720.6 349C721.5 354 722 359 723.5 363.5H743.6V345.6H724V336H743.6V318.7Z"/>
<rect fill="url(#h)" stroke="none" x="753.4" y="318.7" width="26.6" height="17.3"/>
<rect fill="url(#h)" stroke="none" x="753.4" y="345.6" width="26.6" height="18"/>
<path fill="url(#h)" d="M598 319.2H617V320.6H624.4V311H626C630 313 632.5 316 633 319C632 328 625 336 616 336C608 336 600.5 330 598 319.2Z"/>
<path fill="url(#h)" stroke="none" d="M787.8 340.8H852V345C850 361 836 372.2 820 372.2C804 372.2 790 361 787.8 345Z"/>
</g>
<!-- thin lines -->
<g fill="none" stroke="#333" stroke-width="0.7">
<circle cx="613.1" cy="312.5" r="16.9"/>
<path d="M598 319.2C600.5 330 608 336 616 336C625 336 632.5 328 633 319C633.3 314 631 309 627 306"/>
<path d="M580.2 295.5H597.5L601.5 300"/>
<path d="M637 282.8H649M637 404.8H649"/>
<path d="M743.6 336L753.4 345.6M743.6 345.6L753.4 336" stroke="#111" stroke-width="1.1"/>
<path d="M724 336L721.8 340.8L724 345.6"/>
<path d="M945.5 589V613M953 589V613"/>
</g>
<!-- main outline -->
<g fill="none" stroke="#111" stroke-width="1.45" stroke-linejoin="miter">
<path d="M508.5 323.6H492.8V358.2H564.2"/>
<path d="M508.5 323.6V352H534V323.6H564.2M508.5 329.2H534"/>
<path d="M564.2 318.7V363.5H617.2V335.5M617.2 360H620.6M564.2 318.7H617V320.6H624.4V311H620.6V320.6"/>
<path d="M620.6 311V308.8H652.6V340.9H672V308.8H700.5V372.3H620.6V336"/>
<path d="M700.5 318.7H780V363.7H700.5"/>
<path d="M743.6 318.7V336H724V345.6H743.6V363.7M753.4 318.7V336H780M753.4 363.7V345.6H780"/>
<path d="M787.8 345V340.8H852V345C850 361 836 372.2 820 372.2C804 372.2 790 361 787.8 345Z"/>
</g>
<!-- section marks -->
<g fill="none" stroke="#111" stroke-width="2">
<path d="M660.8 277.5V297.5M660.8 391.5V410.5"/>
<path d="M651 282.8H660M651 404.8H660" stroke-width="1.3"/><path d="M648 281.4L652.4 282.8L648 284.2ZM648 403.4L652.4 404.8L648 406.2Z" fill="#111" stroke-width="0.6"/>
</g>
<!-- letters -->
<g fill="none" stroke="#222" stroke-width="1.15" stroke-linejoin="round" stroke-linecap="round">
<path d="M583.3 288.5L587.6 273.5L592 288.5M584.8 284H590.6"/>
<path d="M645 262.5H638.6V276.5H643C647.4 276.5 647.4 268.8 643 268.8H638.6"/>
<path d="M645 407.5H638.6V421.5H643C647.4 421.5 647.4 413.8 643 413.8H638.6"/>
<path d="M811.6 285.7H805.2V299.7H809.6C814 299.7 814 292 809.6 292H805.2"/>
<path d="M831.6 285.7H825.2V299.7H829.6C834 299.7 834 292 829.6 292H825.2"/>
<path d="M815.5 293.7H821.5"/>
</g>
<!-- detail view A -->
<rect x="442.6" y="459.8" width="136.2" height="112.2" fill="none" stroke="#444" stroke-width="0.8"/>
<g clip-path="url(#cA)">
<path fill="url(#hg)" stroke="#22e022" stroke-width="0.7" d="M460.4 524.7H526V533H549.5Q552 533 552 530.5V509.4Q552 504.4 547 504.4H538.3V486.6H578.8V500.6A70 70 0 0 1 462 553C459.5 546 459 536 460.4 524.7Z"/>
</g>
<g fill="none" stroke="#1fe01f" stroke-width="1">
<path d="M442.6 524.7A70 70 0 0 0 578.8 500.6" stroke-width="0.7"/>
<path d="M442.6 524.7H526V533H549.5Q552 533 552 530.5V509.4Q552 504.4 547 504.4H538.3M538.3 486.6V533" stroke-width="1.1"/>
<rect x="439.2" y="483.6" width="143" height="91.2" stroke="#10e810" stroke-width="2.5"/>
<path d="M505.3 477.8L509.5 462.4L513.7 477.8M506.8 473.2H512.2" stroke-width="1.1" stroke-linejoin="round"/>
</g>
<rect x="504" y="482" width="12" height="1.6" fill="#f0f8f0"/>
<rect x="578" y="499.5" width="1.5" height="3" fill="#f080f0"/><rect x="505" y="571.4" width="6" height="1.2" fill="#f080f0"/>
</svg>
</div>
<svg id="bot" class="a" style="left:0;top:637px" width="900" height="83" viewBox="190 637 900 83">
<defs>
<linearGradient id="pb" x1="0" y1="0" x2="1" y2="0"><stop offset="0" stop-color="#a6c3f4"/><stop offset="0.5" stop-color="#c0d4f6"/><stop offset="1" stop-color="#d2e0f8"/></linearGradient>
<linearGradient id="r1" x1="0" y1="0" x2="0" y2="1"><stop offset="0" stop-color="#dbe7fb"/><stop offset="0.5" stop-color="#bcd0f3"/><stop offset="1" stop-color="#8cade6"/></linearGradient>
<linearGradient id="r2" x1="0" y1="0" x2="0" y2="1"><stop offset="0" stop-color="#c8d9f6"/><stop offset="0.3" stop-color="#dae6fa"/><stop offset="1" stop-color="#90b1e8"/></linearGradient>
<linearGradient id="lb" x1="0" y1="0" x2="1" y2="0"><stop offset="0" stop-color="#f0f5fd"/><stop offset="0.5" stop-color="#d4e2f9"/><stop offset="1" stop-color="#a9c4f1"/></linearGradient>
<linearGradient id="at" x1="0" y1="0" x2="0" y2="1"><stop offset="0" stop-color="#eef5fd"/><stop offset="1" stop-color="#c6daf7"/></linearGradient>
<linearGradient id="cb" x1="0" y1="0" x2="1" y2="1"><stop offset="0" stop-color="#fdbb62"/><stop offset="1" stop-color="#f08c28"/></linearGradient>
<linearGradient id="tk" x1="0" y1="0" x2="0" y2="1"><stop offset="0" stop-color="#3f85f2"/><stop offset="0.14" stop-color="#2866e0"/><stop offset="0.55" stop-color="#245edb"/><stop offset="1" stop-color="#1c49b8"/></linearGradient>
<linearGradient id="st" x1="0" y1="0" x2="0" y2="1"><stop offset="0" stop-color="#5cb85c"/><stop offset="0.15" stop-color="#3d9a3d"/><stop offset="0.6" stop-color="#348e34"/><stop offset="1" stop-color="#2a7a2a"/></linearGradient>
<linearGradient id="tr" x1="0" y1="0" x2="0" y2="1"><stop offset="0" stop-color="#4cb2f5"/><stop offset="0.15" stop-color="#1a96ee"/><stop offset="0.6" stop-color="#1290e8"/><stop offset="1" stop-color="#0c78cc"/></linearGradient>
<linearGradient id="t2" x1="0" y1="0" x2="0" y2="1"><stop offset="0" stop-color="#5c9cf8"/><stop offset="0.2" stop-color="#3d83f0"/><stop offset="1" stop-color="#3274de"/></linearGradient>
<g id="ck"><rect x="0" y="0" width="9.6" height="10" rx="0.8" fill="url(#cb)" stroke="#c07820" stroke-width="0.8"/></g>
<g id="tick"><path d="M2.4 3L4.4 7.4L7.6 2.2" fill="none" stroke="#4a2a20" stroke-width="1.2"/></g>
</defs>
<rect x="190" y="637" width="900" height="49" fill="url(#pb)"/>
<!-- left block -->
<rect x="208" y="642" width="38" height="43" fill="url(#lb)"/>
<g fill="#5a6c9e"><rect x="209.4" y="644" width="1" height="1"/><rect x="209.4" y="647" width="1" height="1"/><rect x="209.4" y="650" width="1" height="1"/><rect x="209.4" y="653" width="1" height="1"/><rect x="209.4" y="656" width="1" height="1"/><rect x="209.4" y="659" width="1" height="1"/><rect x="209.4" y="662" width="1" height="1"/><rect x="209.4" y="665" width="1" height="1"/><rect x="209.4" y="668" width="1" height="1"/><rect x="209.4" y="671" width="1" height="1"/><rect x="209.4" y="674" width="1" height="1"/><rect x="209.4" y="677" width="1" height="1"/><rect x="209.4" y="680" width="1" height="1"/></g>
<rect x="214" y="644.4" width="14.4" height="15.2" fill="#f9d493" stroke="#6a6a90" stroke-width="0.7"/>
<path d="M225.4 648V652.6H217.4" fill="none" stroke="#111" stroke-width="1.2"/><path d="M219.4 650.6L216.6 652.6L219.4 654.6Z" fill="#111"/>
<path d="M234 645.6H239.6L242.6 648.6V654.2L239.6 657.2H234L231 654.2V648.6Z" fill="#e8101c" stroke="#fff" stroke-width="0.5"/>
<text x="232.4" y="653" font-family="Liberation Sans, sans-serif" font-size="3.6" font-weight="bold" fill="#fff">STOP</text>
<!-- auto icon -->
<path d="M216 668.4H224M216 672H224" stroke="#111" stroke-width="1"/><path d="M218 666.8L215.4 668.4L218 670ZM222.4 670.4L225 672L222.4 673.6Z" fill="#111"/><text x="215" y="665.6" font-family="Liberation Sans, sans-serif" font-size="4.4" fill="#333">a</text>
<!-- help icon -->
<path d="M232 662.4H241.2V670H238.6L240.6 673L236.4 670H232Z" fill="#e8f4fc" stroke="#333" stroke-width="0.8"/><text x="234.4" y="669" font-family="Liberation Sans, sans-serif" font-size="7" font-weight="bold" fill="#2030a8">?</text>
<!-- cursor -->
<path d="M219.2 655.4V667.6L222 665L224.2 670.2L226.4 669.2L224.2 664.2H227.8Z" fill="#fff" stroke="#111" stroke-width="0.8"/>
<!-- row 1 -->
<rect x="246.2" y="644" width="838.6" height="22.4" rx="1.5" fill="url(#r1)" stroke="#9cb4e0" stroke-width="0.8"/>
<rect x="247.4" y="645.4" width="101" height="18" fill="#e0f0f8" opacity="0.6"/>
<rect x="259.2" y="648" width="84" height="13" fill="#fdfdfb" stroke="#d8d0b0" stroke-width="0.8"/>
<g fill="none" stroke="#3038d8" stroke-width="0.9" stroke-linecap="round" stroke-linejoin="round">
<path d="M262 658.6L264.4 649.8L266.8 658.6M262.8 656H266"/>
<path d="M271.2 649.2Q269.2 654 271.2 659.4"/>
<path d="M275.6 650V658.6M275.6 650L272.8 655.8H277.2"/>
<path d="M279.4 656.4V656.6M279.4 652.4V652.6" stroke-width="1.1"/>
<path d="M281.6 651.6L283.2 650V658.6"/>
<path d="M285 649.2Q287 654 285 659.4"/>
</g>
<use href="#ck" x="349.2" y="649.6"/><use href="#tick" x="349.2" y="649.6"/>
<use href="#ck" x="419" y="649.6"/>
<use href="#ck" x="483" y="649.6"/><use href="#tick" x="483" y="649.6"/>
<use href="#ck" x="541" y="649.6"/>
<rect x="601.4" y="649.8" width="9.4" height="9.8" fill="#ccdcf6" stroke="#aebcd8" stroke-width="0.8"/>
<use href="#ck" x="644.4" y="649.6"/><use href="#ck" x="684.4" y="649.6"/>
<rect x="430" y="648.4" width="48.4" height="11.8" fill="none" stroke="#333" stroke-width="0.6" stroke-dasharray="1 1"/>
<g stroke="#7f97cc" stroke-width="0.8"><path d="M345.6 648V661M536.4 648V661M640.4 648V661M307 670V682"/></g>
<g stroke="#eef4fe" stroke-width="0.7"><path d="M346.4 648.4V661.4M537.2 648.4V661.4M641.2 648.4V661.4M307.8 670.4V682.4"/></g>
<g font-family="Liberation Sans, sans-serif" font-size="7.8" fill="#111">
<text x="361" y="657.6" textLength="46.6" lengthAdjust="spacingAndGlyphs">Обозначение</text>
<text x="431.4" y="657.6" textLength="40" lengthAdjust="spacingAndGlyphs">Развернуто</text>
<text x="494.6" y="657.6" textLength="31.6" lengthAdjust="spacingAndGlyphs">Масштаб</text>
<text x="552.2" y="657.6" textLength="38.4" lengthAdjust="spacingAndGlyphs">Повернуто</text>
<text x="613.8" y="657.6" textLength="16.4" lengthAdjust="spacingAndGlyphs" fill="#a2b0cc">Угол</text>
<text x="656.4" y="657.6" textLength="15.6" lengthAdjust="spacingAndGlyphs">Лист</text>
<text x="695.6" y="657.6" textLength="16.4" lengthAdjust="spacingAndGlyphs">Зона</text>
</g>
<g stroke="#111" stroke-width="0.6"><path d="M361 658.8H366M431.4 658.8H436M494.6 658.8H500.4M552.2 658.8H557.4M656.4 658.8H661M695.6 658.8H700"/></g>
<!-- row 2 -->
<rect x="246.2" y="667.2" width="838.6" height="17.2" rx="1.5" fill="url(#r2)"/>
<path d="M349.8 666.6H419.6V681.6Q419.6 683.6 417.6 683.6H351.8Q349.8 683.6 349.8 681.6Z" fill="url(#at)" stroke="#e8f0fc" stroke-width="0.6"/>
<rect x="346" y="666" width="76" height="1.4" fill="#c2d6f5"/>
<!-- param icon -->
<rect x="253.4" y="672.6" width="8" height="8" fill="#6a6a72"/><rect x="255" y="675" width="1.8" height="5.6" fill="#f0f0f0"/><rect x="258" y="675" width="1.8" height="5.6" fill="#f0f0f0"/><path d="M250.4 670.2H255V673.4" fill="none" stroke="#3040a8" stroke-width="1"/>
<!-- lines icon -->
<path d="M311.2 671.6H321" stroke="#333" stroke-width="1.4"/><path d="M311.2 674.8H321" stroke="#333" stroke-width="1"/><path d="M311.2 677.6H321" stroke="#333" stroke-width="0.9" stroke-dasharray="3 1"/><path d="M311.2 680.6H321" stroke="#333" stroke-width="0.9" stroke-dasharray="1.4 1"/>
<!-- X-X icon -->
<path d="M353 669.6L356.2 674.4M356.2 669.6L353 674.4M360 669.6L363.2 674.4M363.2 669.6L360 674.4M357 672H359.2" stroke="#222" stroke-width="0.8" fill="none"/>
<rect x="353" y="676.2" width="11" height="4.4" rx="0.8" fill="#fff" stroke="#3040d8" stroke-width="0.9"/>
<g font-family="Liberation Sans, sans-serif" font-size="7.8">
<text x="262.8" y="679.4" fill="#9aa9c6" textLength="39.6" lengthAdjust="spacingAndGlyphs">Параметры</text>
<text x="323.2" y="679.4" fill="#9aa9c6" textLength="21.6" lengthAdjust="spacingAndGlyphs">Линии</text>
<text x="365.4" y="679.4" fill="#111" textLength="49.4" lengthAdjust="spacingAndGlyphs">Надпись вида</text>
</g>
<!-- status -->
<rect x="190" y="685" width="900" height="14.4" fill="#ece9d8"/><rect x="190" y="685" width="900" height="1" fill="#c8c6b8"/><rect x="190" y="686" width="900" height="1" fill="#f8f7ef"/>
<text x="194" y="696.2" font-family="Liberation Sans, sans-serif" font-size="7.8" fill="#111" textLength="57.8" lengthAdjust="spacingAndGlyphs">Создать объект</text>
<g fill="#b8b4a0"><rect x="1086" y="695" width="1.4" height="1.4"/><rect x="1083" y="695" width="1.4" height="1.4"/><rect x="1080" y="695" width="1.4" height="1.4"/><rect x="1086" y="692" width="1.4" height="1.4"/><rect x="1083" y="692" width="1.4" height="1.4"/><rect x="1086" y="689" width="1.4" height="1.4"/></g>
<!-- taskbar -->
<rect x="190" y="699" width="900" height="21" fill="url(#tk)"/>
<path d="M190 699H249Q257.6 702 257.6 709.6Q257.6 717 251 720H190Z" fill="url(#st)"/>
<path d="M249 699Q258 702 257.8 709.6Q257.6 717 251 720" fill="none" stroke="#1d5a20" stroke-width="0.8" opacity="0.6"/>
<g transform="translate(198.4 703.4)"><path d="M0.6 1.4Q2.8 0 5 1.4L4.2 5.4Q2.2 4.2 0 5.4Z" fill="#e8502c"/><path d="M5.8 1.6Q8 3 10.2 1.6L9.4 5.6Q7.2 6.8 5 5.6Z" fill="#7ac043"/><path d="M-0.2 6.4Q2 5.2 4 6.4L3.2 10.4Q1.2 9.2 -1 10.4Z" fill="#3a8ee8"/><path d="M4.8 6.6Q7 8 9.2 6.6L8.4 10.6Q6.2 11.8 4 10.6Z" fill="#f8c838"/></g>
<text x="214.4" y="714" font-family="Liberation Sans, sans-serif" font-size="12.6" font-weight="bold" font-style="italic" fill="#fff" textLength="25.4" lengthAdjust="spacingAndGlyphs" style="text-shadow:1px 1px 1px #1a4a1a">пуск</text>
<rect x="987" y="699" width="103" height="21" fill="url(#tr)"/>
<rect x="264.6" y="701.8" width="112" height="17" rx="1.6" fill="#1e52b7" stroke="#163f98" stroke-width="0.7"/>
<rect x="378.4" y="701.8" width="109" height="17" rx="1.6" fill="url(#t2)"/>
<circle cx="277.4" cy="710.2" r="5.2" fill="#d8ecfc" stroke="#5c9ce0" stroke-width="0.8"/><path d="M275 707.6V713M275 710.2H276.6L279.6 707.4M276.6 710.2L279.8 713.2M277 707.6V713" stroke="#2a70c8" stroke-width="1" fill="none"/>
<rect x="384.4" y="704.6" width="10" height="10.6" fill="#1828c8" stroke="#e8ecff" stroke-width="0.8"/><rect x="386.4" y="706.6" width="4.4" height="3.4" fill="none" stroke="#fff" stroke-width="0.8"/><path d="M386.4 712.4H392.4" stroke="#fff" stroke-width="0.8"/>
<rect x="967.6" y="703.4" width="11" height="11" fill="#3a6cd4" opacity="0.7"/>
<g font-family="Liberation Sans, sans-serif" font-size="7.8" fill="#fff">
<text x="285.6" y="712.8" textLength="80.4" lengthAdjust="spacingAndGlyphs">КОМПАС-3D V12 - [А...</text>
<text x="397.4" y="712.8" textLength="28" lengthAdjust="spacingAndGlyphs">Flashing</text>
<text x="969" y="712.6" textLength="8.4" lengthAdjust="spacingAndGlyphs">RL</text>
<text x="1061.8" y="712.8" textLength="18.8" lengthAdjust="spacingAndGlyphs">15:12</text>
</g>
<!-- tray -->
<rect x="986.8" y="699" width="1" height="21" fill="#5ab8f8"/>
<circle cx="986.6" cy="709.8" r="5.6" fill="#2c8cf0" stroke="#a8d4fc" stroke-width="0.8"/><path d="M988.2 706.8L985.2 709.8L988.2 712.8" fill="none" stroke="#fff" stroke-width="1.5"/>
<rect x="994.6" y="704.2" width="10.4" height="10.2" fill="#1c22f0" stroke="#3a50f8" stroke-width="0.6"/><rect x="996.6" y="706" width="4.6" height="3.6" fill="none" stroke="#fff" stroke-width="0.9"/><path d="M1002.4 706.4V710M996.6 712H1003" stroke="#fff" stroke-width="0.8"/>
<g id="pc"><rect x="1010.6" y="704.4" width="5.6" height="4.8" fill="#586078" stroke="#1a1e2a" stroke-width="0.6"/><rect x="1007.6" y="707.6" width="5.8" height="4.8" fill="#6a7490" stroke="#1a1e2a" stroke-width="0.6"/><path d="M1008 714H1013.6M1012 710.8H1016.4" stroke="#c8d4e8" stroke-width="0.9"/></g>
<use href="#pc" x="12.6"/>
<path d="M1033 704.6V714.4M1034.4 709.4L1040.6 704.4" stroke="#e8101c" stroke-width="2.2" fill="none"/><path d="M1035.4 709.4L1041.4 714.6" stroke="#111" stroke-width="2.2" fill="none"/>
<rect x="1045.4" y="704.8" width="9.4" height="9.8" rx="1.2" fill="#f0eaf0" stroke="#a890a8" stroke-width="0.6"/><path d="M1047.4 713L1049.2 707.4L1050.8 711.4L1052.6 706.6" stroke="#a02878" stroke-width="1.2" fill="none"/>
<rect x="1016.8" y="687" width="0.8" height="12" fill="#fbfaf2"/><rect x="1077.4" y="687" width="0.8" height="12" fill="#fbfaf2"/>
</svg>
</div>
</body></html>
